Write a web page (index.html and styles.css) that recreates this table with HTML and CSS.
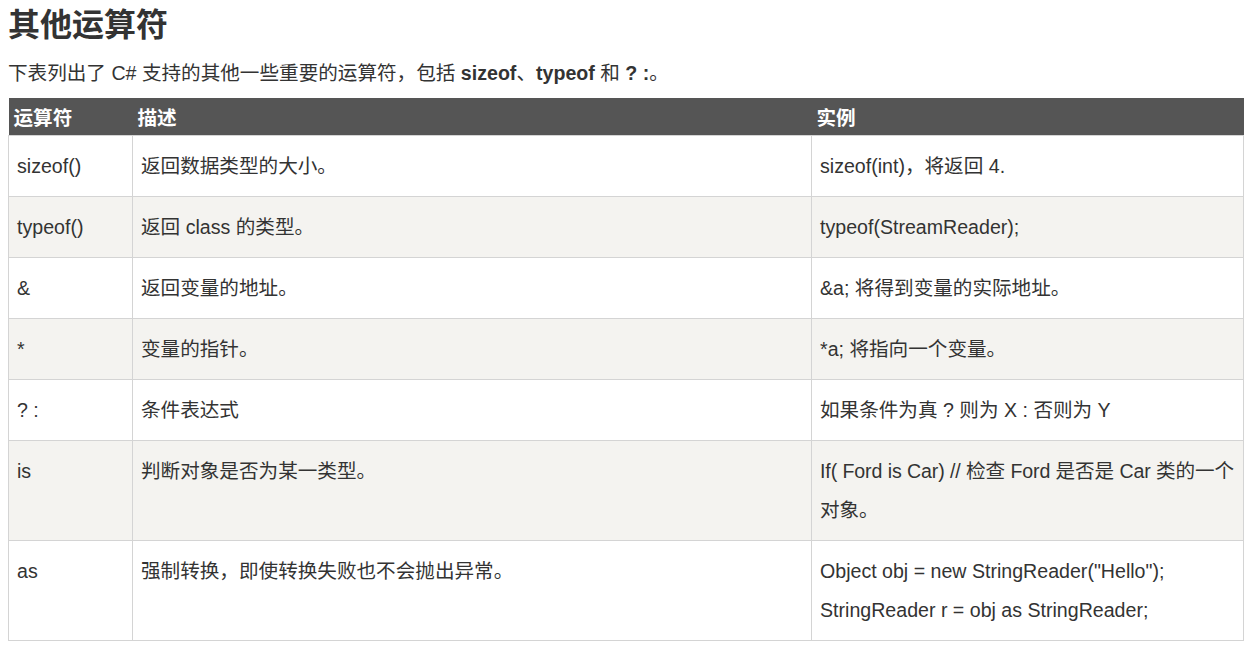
FILE: index.html
```html
<!DOCTYPE html>
<html lang="zh-CN">
<head>
<meta charset="utf-8">
<title>其他运算符</title>
<link rel="stylesheet" href="styles.css">
</head>
<body>
<div class="page">
  <h2 class="title">其他运算符</h2>
  <p class="intro">下表列出了 C# 支持的其他一些重要的运算符，包括 <strong>sizeof</strong>、<strong>typeof</strong> 和 <strong>? :</strong>。</p>
  <table class="reference">
    <colgroup>
      <col class="c1">
      <col class="c2">
      <col class="c3">
    </colgroup>
    <thead>
      <tr><th>运算符</th><th>描述</th><th>实例</th></tr>
    </thead>
    <tbody>
      <tr><td>sizeof()</td><td>返回数据类型的大小。</td><td>sizeof(int)，将返回 4.</td></tr>
      <tr><td>typeof()</td><td>返回 class 的类型。</td><td>typeof(StreamReader);</td></tr>
      <tr><td>&amp;</td><td>返回变量的地址。</td><td>&amp;a; 将得到变量的实际地址。</td></tr>
      <tr><td>*</td><td>变量的指针。</td><td>*a; 将指向一个变量。</td></tr>
      <tr><td>? :</td><td>条件表达式</td><td>如果条件为真 ? 则为 X : 否则为 Y</td></tr>
      <tr><td>is</td><td>判断对象是否为某一类型。</td><td class="tight">If( Ford is Car) // 检查 Ford 是否是 Car 类的一个对象。</td></tr>
      <tr><td>as</td><td>强制转换，即使转换失败也不会抛出异常。</td><td>Object obj = new StringReader("Hello");<br>StringReader r = obj as StringReader;</td></tr>
    </tbody>
  </table>
</div>
</body>
</html>
```
FILE: styles.css
```css
html, body {
  margin: 0;
  padding: 0;
  background: #fff;
}
body {
  font-family: "Liberation Sans", Arial, "Noto Sans CJK SC", sans-serif;
  color: #333;
}
.page {
  padding: 0 9px 0 8px;
}
.title {
  margin: 0;
  padding-top: 2px;
  font-size: 32px;
  line-height: 46px;
  font-weight: bold;
  color: #333;
}
.intro {
  margin: 8px 0 0;
  font-size: 19.6px;
  line-height: 34px;
}
.intro strong {
  font-weight: bold;
}
.reference {
  margin-top: 8px;
  width: 100%;
  border-collapse: collapse;
  table-layout: fixed;
  font-size: 19.6px;
}
.reference .c1 { width: 124px; }
.reference .c2 { width: 679px; }
.reference .c3 { width: auto; }
.reference th {
  background: #555;
  color: #fff;
  font-weight: bold;
  text-align: left;
  vertical-align: top;
  padding: 5px 5px 1px;
  line-height: 31px;
}
.reference td {
  border: 1px solid #d4d4d4;
  padding: 11px 8px 10px;
  line-height: 39px;
  vertical-align: top;
}
.reference td.tight {
  padding-right: 0;
  letter-spacing: -0.1px;
}
.reference tbody tr:nth-child(even) td {
  background: #f4f3f0;
}
```
